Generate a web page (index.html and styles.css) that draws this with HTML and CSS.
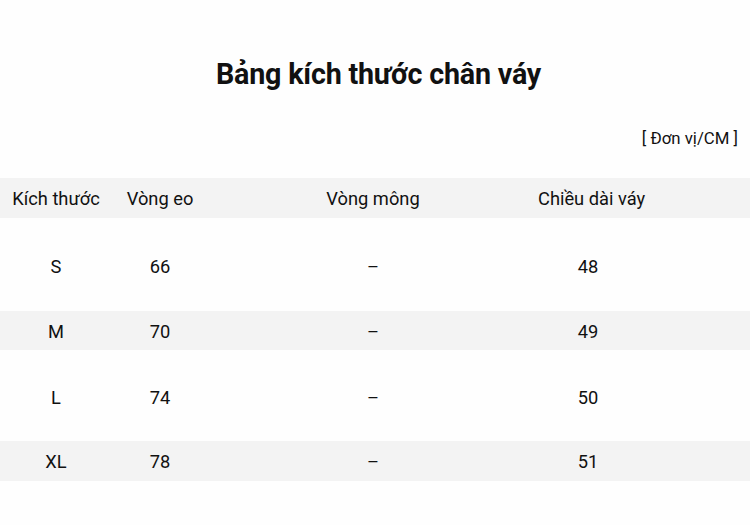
FILE: index.html
```html
<!DOCTYPE html>
<html lang="vi">
<head>
<meta charset="utf-8">
<title>Bảng kích thước chân váy</title>
<link rel="stylesheet" href="styles.css">
</head>
<body>
<div class="page">
  <h1 class="title">Bảng kích thước chân váy</h1>
  <div class="unit">[ Đơn vị/CM ]</div>
  <div class="table">
    <div class="row head">
      <div class="cell">Kích thước</div>
      <div class="cell">Vòng eo</div>
      <div class="cell">Vòng mông</div>
      <div class="cell length">Chiều dài váy</div>
      <div class="cell"></div>
    </div>
    <div class="row tall">
      <div class="cell">S</div>
      <div class="cell">66</div>
      <div class="cell">–</div>
      <div class="cell">48</div>
      <div class="cell"></div>
    </div>
    <div class="row short shade">
      <div class="cell">M</div>
      <div class="cell">70</div>
      <div class="cell">–</div>
      <div class="cell">49</div>
      <div class="cell"></div>
    </div>
    <div class="row tall">
      <div class="cell">L</div>
      <div class="cell">74</div>
      <div class="cell">–</div>
      <div class="cell">50</div>
      <div class="cell"></div>
    </div>
    <div class="row short shade">
      <div class="cell">XL</div>
      <div class="cell">78</div>
      <div class="cell">–</div>
      <div class="cell">51</div>
      <div class="cell"></div>
    </div>
  </div>
</div>
</body>
</html>
```

FILE: styles.css
```css
* { box-sizing: border-box; }
html, body {
  margin: 0;
  padding: 0;
  background: #fefefe;
}
body {
  font-family: Roboto, "Liberation Sans", Arial, sans-serif;
  color: #111;
  width: 750px;
  height: 525px;
  overflow: hidden;
}
.page {
  display: flex;
  flex-direction: column;
}
.title {
  margin: 0;
  padding-top: 55px;
  padding-left: 7px;
  height: 125px;
  text-align: center;
  font-size: 28.7px;
  font-weight: 700;
  line-height: 38px;
  letter-spacing: -0.2px;
}
.unit {
  height: 53px;
  text-align: right;
  padding-right: 12px;
  font-size: 16.8px;
  line-height: 26px;
}
.table {
  display: flex;
  flex-direction: column;
}
.row {
  display: grid;
  grid-template-columns: 112px 96px 330px 100px 1fr;
  align-items: center;
  font-size: 18.3px;
  text-align: center;
}
.head {
  height: 40px;
  background: #f3f3f3;
}
.tall { height: 93px; padding-top: 3px; }
.row.tall:nth-child(4) { height: 91px; }
.short { height: 39px; padding-top: 1px; }
.row.short:nth-child(5) { height: 40px; }
.shade { background: #f3f3f3; }
.cell { white-space: nowrap; }
.length { padding-right: 6px; }
```
